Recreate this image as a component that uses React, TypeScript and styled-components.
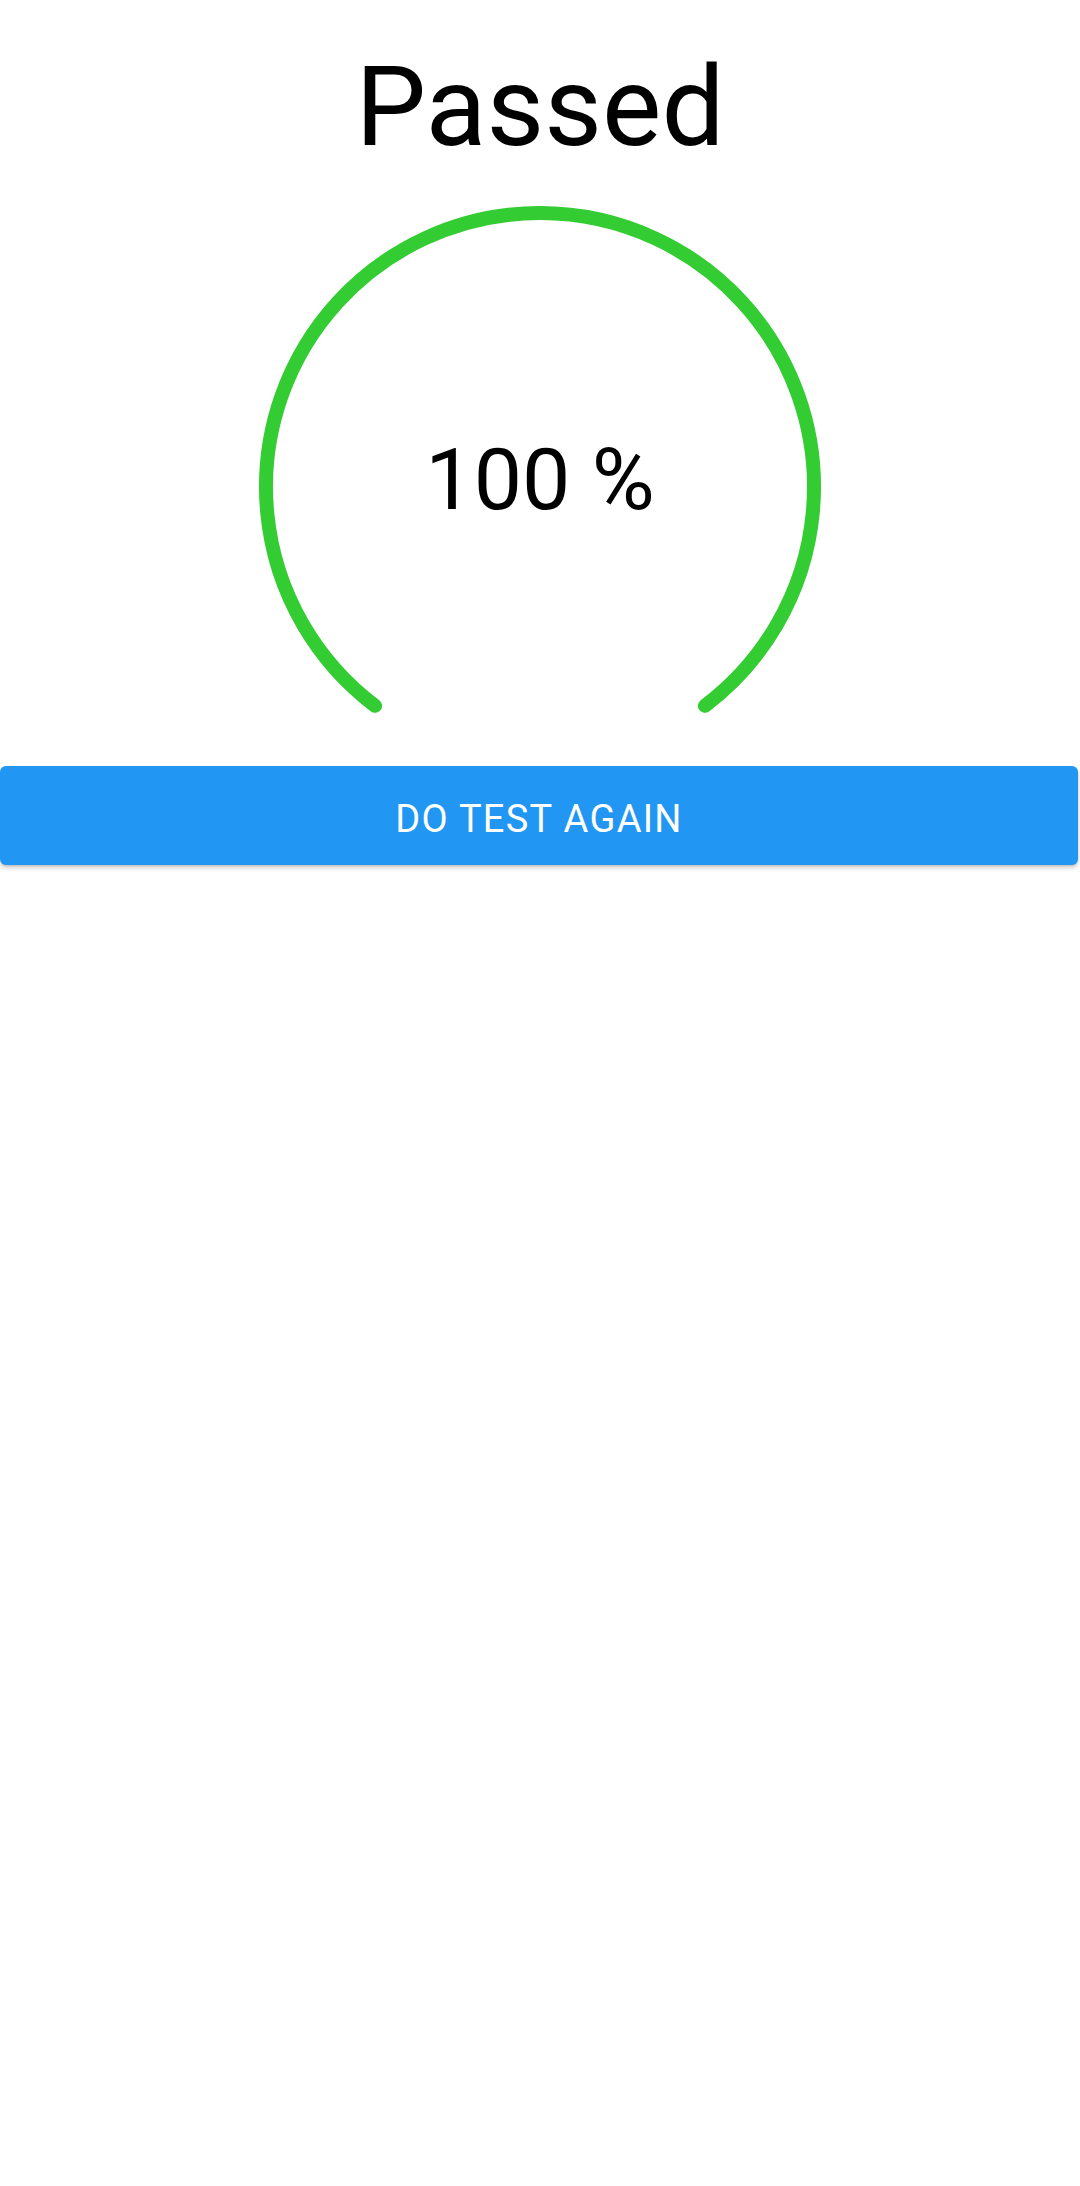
import styled, { createGlobalStyle } from "styled-components";

const GlobalStyle = createGlobalStyle`
    html, body {
        margin: 0;
        padding: 0;
        background-color: #ffffff;
    }
    body {
        font-family: Roboto, "Noto Sans", "Liberation Sans", sans-serif;
    }
`;

const Container = styled.div`
    display: flex;
    flex-direction: column;
    align-items: center;
    width: 100%;
    min-height: 100vh;
    background-color: #ffffff;
`;

const Title = styled.h1`
    margin: 0;
    padding-top: 51px;
    font-size: 112px;
    font-weight: 400;
    line-height: 112px;
    color: #000000;
`;

const GaugeBox = styled.div`
    position: relative;
    width: 570px;
    height: 520px;
    margin-top: 37px;
`;

const GaugeLabel = styled.span`
    position: absolute;
    left: 0;
    right: 0;
    top: 237px;
    text-align: center;
    font-size: 86px;
    line-height: 86px;
    color: #000000;
`;

const AgainButton = styled.button`
    display: flex;
    align-items: center;
    justify-content: center;
    align-self: stretch;
    height: 99px;
    margin: 46px 2px 0 0;
    padding: 7px 0 0 0;
    border: none;
    border-radius: 6px;
    background-color: #2196f3;
    color: #ffffff;
    font-family: Roboto, "Noto Sans", "Liberation Sans", sans-serif;
    font-size: 38px;
    font-weight: 400;
    letter-spacing: 1.3px;
    line-height: 1;
    text-transform: uppercase;
    box-shadow: 0 3px 5px rgba(0, 0, 0, 0.18), 0 1px 2px rgba(0, 0, 0, 0.12);
    cursor: pointer;
`;

// arc of the gauge, leaves a gap at the bottom
const arcPath = (cx: number, cy: number, r: number, gapDeg: number, percent: number) => {
    const start = 90 + gapDeg;
    const sweep = (360 - gapDeg * 2) * (percent / 100);
    const end = start + sweep;
    const toXY = (deg: number) => {
        const rad = (deg * Math.PI) / 180;
        return [cx + r * Math.cos(rad), cy + r * Math.sin(rad)];
    };
    const [x1, y1] = toXY(start);
    const [x2, y2] = toXY(end);
    const large = sweep > 180 ? 1 : 0;
    return `M ${x1} ${y1} A ${r} ${r} 0 ${large} 1 ${x2} ${y2}`;
};

function Result() {
    const percent = 100;

    return (
        <Container>
            <GlobalStyle />
            <Title>Passed</Title>
            <GaugeBox>
                <svg width="570" height="520" viewBox="0 0 570 520">
                    <path
                        d={arcPath(285, 287, 274, 37, percent)}
                        fill="none"
                        stroke="#33cc33"
                        strokeWidth="14"
                        strokeLinecap="round"
                    />
                </svg>
                <GaugeLabel>{percent} %</GaugeLabel>
            </GaugeBox>
            <AgainButton>Do test again</AgainButton>
        </Container>
    );
}

export default Result;
